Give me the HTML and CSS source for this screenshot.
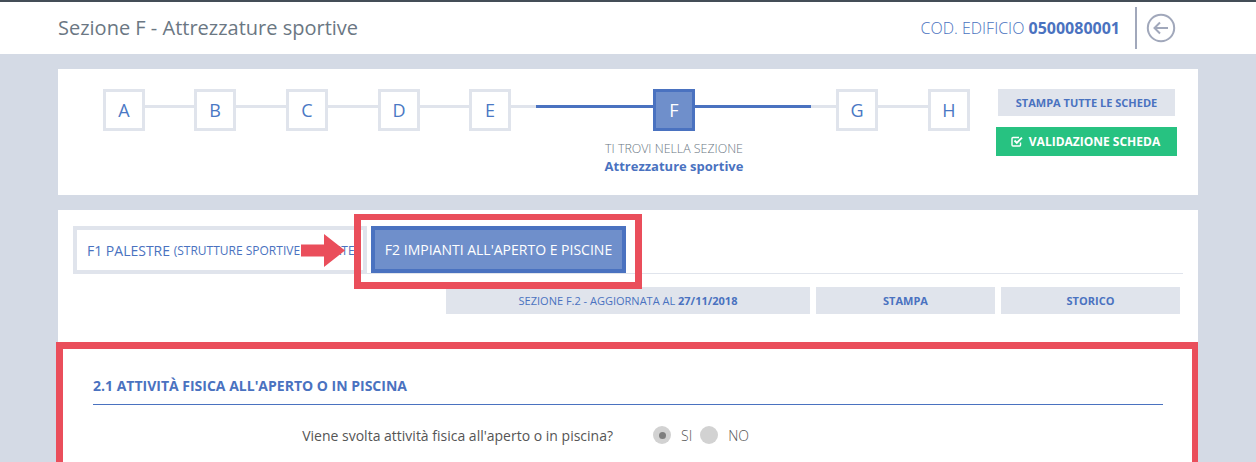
FILE: index.html
```html
<!DOCTYPE html>
<html>
<head>
  <meta charset="UTF-8">
  <title>Sezione F - Attrezzature sportive</title>
  <link rel="stylesheet" href="styles.css">
</head>
<body>

<header class="topbar">
  <h1 class="page-title">Sezione F - Attrezzature sportive</h1>
  <div class="building-code">COD. EDIFICIO <b>0500080001</b></div>
  <a class="back-link" href="#">
    <svg width="30" height="30" viewBox="0 0 30 30" fill="none" stroke="#a1a8bb">
      <circle cx="15" cy="15" r="13.2" stroke-width="2"/>
      <path d="M22 15H8.5M14 9.5L8.5 15L14 20.5" stroke-width="2"/>
    </svg>
  </a>
</header>

<main class="content">
  <section class="card steps-card">
    <div class="steps">
      <div class="step">A</div>
      <div class="link w49"></div>
      <div class="step">B</div>
      <div class="link w50"></div>
      <div class="step">C</div>
      <div class="link w50"></div>
      <div class="step">D</div>
      <div class="link w49"></div>
      <div class="step">E</div>
      <div class="link near-left"></div>
      <div class="current">
        <div class="step active">F</div>
        <div class="current-hint">TI TROVI NELLA SEZIONE</div>
        <div class="current-name">Attrezzature sportive</div>
      </div>
      <div class="link near-right"></div>
      <div class="step">G</div>
      <div class="link w50"></div>
      <div class="step">H</div>
    </div>
    <div class="steps-actions">
      <button class="btn print-all">STAMPA TUTTE LE SCHEDE</button>
      <button class="btn validate">
        <svg width="12" height="11" viewBox="0 0 12 11" fill="none" stroke="#fff">
          <path d="M9.5 6.5V9a1 1 0 0 1-1 1H2a1 1 0 0 1-1-1V2.5a1 1 0 0 1 1-1h6" stroke-width="1.4"/>
          <path d="M3.5 4.5L5.8 6.8L11 1.6" stroke-width="1.9"/>
        </svg>
        VALIDAZIONE SCHEDA
      </button>
    </div>
  </section>

  <section class="card detail-card">
    <div class="tabs">
      <a class="tab" href="#">F1 PALESTRE <small>(STRUTTURE SPORTIVE COPERTE</small></a>
      <a class="tab active" href="#">F2 IMPIANTI ALL'APERTO E PISCINE<span class="callout"></span></a>
      <svg class="arrow" width="44" height="33" viewBox="0 0 44 33">
        <path d="M0 10.5H23V0L44 16.5L23 33V22.5H0Z" fill="#ea4e5b"/>
      </svg>
    </div>
    <div class="toolbar">
      <button class="btn updated">SEZIONE F.2 - AGGIORNATA AL <b>27/11/2018</b></button>
      <button class="btn tool">STAMPA</button>
      <button class="btn tool">STORICO</button>
    </div>

    <div class="form-section">
      <h2 class="form-title">2.1 ATTIVITÀ FISICA ALL'APERTO O IN PISCINA</h2>
      <div class="form-row">
        <label class="form-label">Viene svolta attività fisica all'aperto o in piscina?</label>
        <div class="radios">
          <span class="radio checked"></span><span class="radio-text">SI</span>
          <span class="radio"></span><span class="radio-text">NO</span>
        </div>
      </div>
    </div>
  </section>
</main>

</body>
</html>
```

FILE: styles.css
```css
html, body {
  height: 462px;
  overflow: hidden;
}
body {
  background: #d4dae5;
  font-family: "Open Sans", sans-serif;
  margin: 0;
  padding: 0;
}
button {
  font-family: inherit;
  border: none;
  cursor: pointer;
}

/* top bar */
.topbar {
  height: 52px;
  background: white;
  border-top: 2px solid #444e57;
  display: flex;
  align-items: center;
  padding-left: 58px;
}
.page-title {
  font-size: 20px;
  font-weight: 400;
  color: #6b7783;
  margin: 0 auto 0 0;
  position: relative;
  top: -1px;
}
.building-code {
  font-size: 16px;
  font-weight: 300;
  color: #4a72c0;
  white-space: nowrap;
}
.building-code b {
  font-weight: 700;
}
.back-link {
  display: flex;
  align-items: center;
  height: 42px;
  margin: 0 80px 0 15px;
  padding-left: 9px;
  border-left: 2px solid #a1a8bb;
}

/* cards */
.content {
  padding: 15px 58px 0;
}
.card {
  background: white;
}
.steps-card {
  height: 126px;
  display: flex;
  box-sizing: border-box;
  padding: 20px 21px 0 45px;
  margin-bottom: 15px;
}

/* steps */
.steps {
  display: flex;
  align-items: flex-start;
  margin-right: auto;
}
.step {
  width: 42px;
  height: 42px;
  box-sizing: border-box;
  border: 3px solid #e0e4ec;
  background: white;
  color: #4a78c4;
  font-size: 18px;
  display: flex;
  align-items: center;
  justify-content: center;
}
.step.active {
  background: #6f8fcb;
  border-color: #4a72c0;
  color: white;
}
.link {
  height: 3px;
  margin-top: 16px;
  background: #e0e4ec;
}
.w49 { width: 49px; }
.w50 { width: 50px; }
.near-left {
  width: 142px;
  background: linear-gradient(to right, #e0e4ec 25px, #4a72c0 25px);
}
.near-right {
  width: 141px;
  background: linear-gradient(to left, #e0e4ec 25px, #4a72c0 25px);
}
.current {
  width: 42px;
  display: flex;
  flex-direction: column;
  align-items: center;
  white-space: nowrap;
}
.current-hint {
  font-size: 12.4px;
  font-weight: 300;
  color: #6b7783;
  margin-top: 9px;
  line-height: 17px;
}
.current-name {
  font-size: 13px;
  font-weight: 700;
  color: #4a72c0;
  line-height: 18px;
}
.steps-actions {
  width: 181px;
  display: flex;
  flex-direction: column;
  align-items: center;
  gap: 11px;
}
.btn {
  background: #e0e4ec;
  color: #4a72c0;
  font-size: 11px;
  font-weight: 700;
  padding: 0;
}
.print-all {
  width: 177px;
  height: 27px;
}
.validate {
  width: 181px;
  height: 29px;
  background: #27c281;
  color: white;
  font-size: 12px;
  display: flex;
  align-items: center;
  justify-content: center;
  gap: 6px;
  padding-right: 2px;
}

/* tabs */
.detail-card {
  padding: 16px 0 0;
}
.tabs {
  position: relative;
  display: flex;
  gap: 4px;
  margin: 0 15px;
  height: 47px;
  border-bottom: 1px solid #e0e4ec;
}
.tab {
  position: relative;
  display: flex;
  align-items: center;
  box-sizing: border-box;
  height: 48px;
  border: 4px solid #e0e4ec;
  background: white;
  color: #4a72c0;
  font-size: 14px;
  text-decoration: none;
  padding: 0 10px;
  width: 294px;
  white-space: pre;
  overflow: hidden;
}
.tab small {
  font-size: 12px;
}
.tab.active {
  width: 255px;
  height: 47px;
  background: #6f8fcb;
  border-color: #4a72c0;
  color: white;
  justify-content: center;
  overflow: visible;
}
.callout {
  position: absolute;
  top: -16px;
  left: -21px;
  width: 288px;
  height: 75px;
  box-sizing: border-box;
  border: 7px solid #ea4e5b;
  border-top-width: 6px;
}
.arrow {
  position: absolute;
  left: 228px;
  top: 8px;
}

/* toolbar */
.toolbar {
  display: flex;
  justify-content: flex-end;
  gap: 6px;
  padding-right: 18px;
  margin-top: 13px;
  margin-bottom: 28px;
}
.toolbar .btn {
  height: 27px;
  width: 179px;
}
.toolbar .updated {
  width: 364px;
  font-weight: 400;
  font-size: 11px;
}
.updated b {
  font-weight: 700;
}

/* form section */
.form-section {
  margin-left: -2px;
  min-height: 200px;
  border: 7px solid #ea4e5b;
  border-right-width: 6px;
  padding: 28px 29px 0 30px;
}
.form-title {
  font-size: 14px;
  font-weight: 700;
  color: #4a72c0;
  margin: 0;
  line-height: 18px;
  padding-bottom: 9px;
  border-bottom: 1px solid #4a72c0;
}
.form-row {
  display: flex;
  align-items: center;
  margin-top: 20px;
  height: 20px;
}
.form-label {
  width: 520px;
  text-align: right;
  font-size: 14px;
  color: #555;
}
.radios {
  display: flex;
  align-items: center;
  margin-left: 40px;
}
.radio {
  width: 18px;
  height: 18px;
  border-radius: 50%;
  background: #d2d2d2;
  display: flex;
  align-items: center;
  justify-content: center;
}
.radio.checked::after {
  content: "";
  width: 7px;
  height: 7px;
  border-radius: 50%;
  background: #7f7f7f;
}
.radio-text {
  font-size: 14px;
  font-weight: 300;
  color: #555;
  margin: 0 8px 0 10px;
}
```
